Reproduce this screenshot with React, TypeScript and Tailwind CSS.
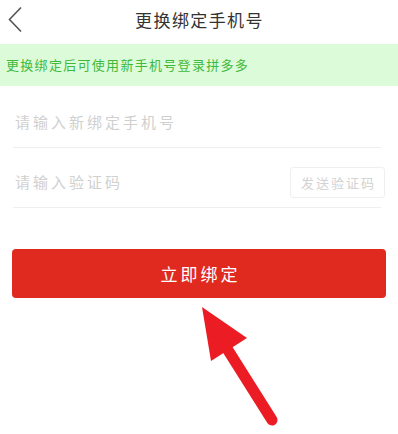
import React from 'react';

export default function App() {
  return (
    <div
      className="relative w-[398px] h-[434px] bg-white overflow-hidden"
      style={{ fontFamily: '"Noto Sans CJK SC", "Noto Sans", sans-serif' }}
    >
      {/* header */}
      <div className="relative h-[44px] flex items-center justify-center">
        <svg className="absolute left-[7px] top-[6px]" width="16" height="27" viewBox="0 0 16 27">
          <path d="M14 1.5 L2.5 13.5 L14 25.5" fill="none" stroke="#555" strokeWidth="1.6" />
        </svg>
        <span className="text-[17px] tracking-[1.4px] text-[#333] pl-[1px] -mt-[4px]">更换绑定手机号</span>
      </div>

      {/* notice */}
      <div className="h-[42px] bg-[#dcfbd9] flex items-center pl-[6px]">
        <span className="text-[13px] tracking-[1.3px] text-[#3fb93c]">更换绑定后可使用新手机号登录拼多多</span>
      </div>

      {/* form */}
      <div className="ml-[13px] mr-[17px]">
        <div className="h-[62px] flex items-center border-b border-[#efefef] pl-[2px] pt-[12px]">
          <input
            placeholder="请输入新绑定手机号"
            className="w-full outline-none text-[15px] tracking-[3px] placeholder:text-[#d0d0d0] bg-transparent"
          />
        </div>
        <div className="h-[60px] flex items-center justify-between border-b border-[#efefef] pl-[2px] pt-[10px]">
          <input
            placeholder="请输入验证码"
            className="flex-1 min-w-0 outline-none text-[15px] tracking-[3px] placeholder:text-[#d0d0d0] bg-transparent"
          />
          <button className="w-[95px] h-[31px] -mr-[4px] border border-[#efefef] rounded-[3px] text-[13px] tracking-[2px] text-[#d2d2d2] flex items-center justify-center pl-[2px]">
            发送验证码
          </button>
        </div>
      </div>

      <div className="px-[12px] pt-[41px]">
        <button className="w-full h-[49px] bg-[#e02a1f] rounded-[4px] text-white text-[17px] tracking-[3px] flex items-center justify-center pl-[3px]">
          立即绑定
        </button>
      </div>

      {/* pointer arrow */}
      <svg className="absolute left-0 top-0 pointer-events-none" width="398" height="434" viewBox="0 0 398 434">
        <polygon points="202,307 211,361 247,338" fill="#ec1c24" />
        <line x1="226" y1="347" x2="272" y2="420" stroke="#ec1c24" strokeWidth="11" strokeLinecap="round" />
      </svg>
    </div>
  );
}
